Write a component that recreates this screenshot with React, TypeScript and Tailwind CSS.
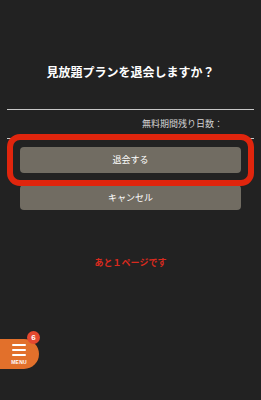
export default function App() {
  return (
    <div
      className="relative h-[400px] w-full overflow-hidden bg-[#222222] text-white"
      style={{ fontFamily: '"Noto Sans CJK JP", "Noto Sans", sans-serif' }}
    >
      <div className="pt-[64px] text-center text-[12px] font-bold leading-[16px]">
        見放題プランを退会しますか？
      </div>

      <div className="mx-[7px] mt-[29px] border-t border-[#c8c8c8]" />
      <div className="mx-[7px] flex h-[29px] items-center justify-end border-b border-[#c8c8c8] pr-[31px] text-[9px] text-[#d4d4d4]">
        無料期間残り日数：
      </div>

      <div className="relative">
        <div className="flex flex-col gap-[12px] px-[20px] pt-[8px]">
          <button className="flex h-[26px] w-full items-center justify-center rounded-[4px] bg-[#716c62] text-[9px] text-white">
            退会する
          </button>
          <button className="flex h-[25px] w-full items-center justify-center rounded-[4px] bg-[#716c62] text-[9px] text-white">
            キャンセル
          </button>
        </div>
        <div className="pointer-events-none absolute left-[7px] top-[-5px] h-[52px] w-[247px] rounded-[13px] border-[6px] border-[#e0250d]" />
      </div>

      <div className="mt-[47px] text-center text-[9px] font-bold leading-[12px] text-[#d92a1e]">
        あと１ページです
      </div>

      <div className="absolute left-0 top-[339px] flex h-[30px] w-[39px] flex-col items-center justify-center rounded-r-[15px] bg-[#e2702b] pr-[1px]">
        <div className="flex flex-col gap-[3px]">
          <div className="h-[2px] w-[14px] rounded bg-white" />
          <div className="h-[2px] w-[14px] rounded bg-white" />
          <div className="h-[2px] w-[14px] rounded bg-white" />
        </div>
        <div className="mt-[3px] text-[5px] font-bold leading-[6px] tracking-[0.2px]" style={{ fontFamily: '"Liberation Sans", sans-serif' }}>
          MENU
        </div>
        <div
          className="absolute left-[27px] top-[-8px] flex h-[13px] w-[13px] items-center justify-center rounded-full bg-[#e5482f] text-[8px] font-bold text-white"
          style={{ fontFamily: '"Liberation Sans", sans-serif' }}
        >
          6
        </div>
      </div>
    </div>
  );
}
